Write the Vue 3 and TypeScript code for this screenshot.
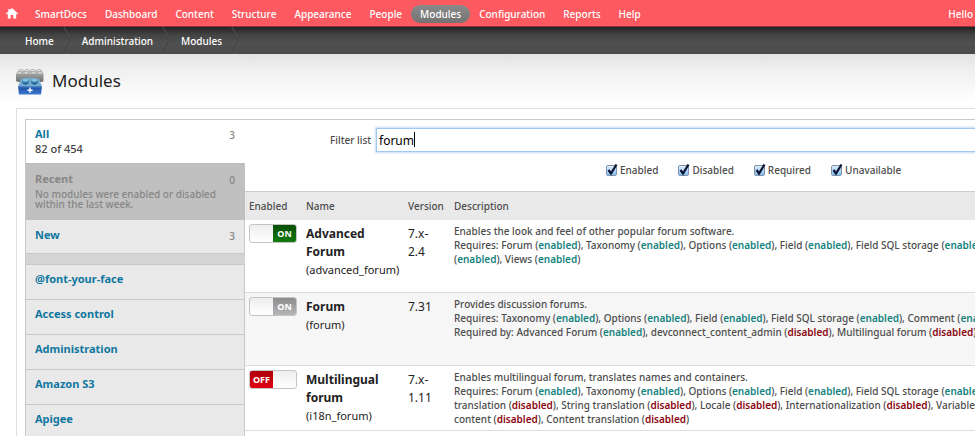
<script setup lang="ts">
import { ref, computed } from 'vue'

type Status = 'enabled' | 'disabled'
type State = 'on' | 'locked' | 'off'
interface Part { text: string; status?: Status }
interface ModuleRow { name: string[]; machine: string; version: string[]; state: State; lines: Part[][]; short?: boolean }

// Splits "Forum (enabled), Views (disabled)" into plain and status parts.
function parse(line: string): Part[] {
  return line.split(/(?<=\()(enabled|disabled)(?=\))/).map((text) =>
    text === 'enabled' || text === 'disabled' ? { text, status: text } : { text })
}

const menu = ['SmartDocs', 'Dashboard', 'Content', 'Structure', 'Appearance', 'People', 'Modules', 'Configuration', 'Reports', 'Help']
const crumbs = ['Home', 'Administration', 'Modules']
const categories = ['@font-your-face', 'Access control', 'Administration', 'Amazon S3', 'Apigee']

const query = ref('forum')
const filters = ref([
  { label: 'Enabled', on: true },
  { label: 'Disabled', on: true },
  { label: 'Required', on: true },
  { label: 'Unavailable', on: true },
])

const modules = ref<ModuleRow[]>([
  {
    name: ['Advanced', 'Forum'], machine: 'advanced_forum', version: ['7.x-', '2.4'], state: 'on',
    lines: [
      'Enables the look and feel of other popular forum software.',
      'Requires: Forum (enabled), Taxonomy (enabled), Options (enabled), Field (enabled), Field SQL storage (enabled),',
      '(enabled), Views (enabled)',
    ].map(parse),
  },
  {
    name: ['Forum'], machine: 'forum', version: ['7.31'], state: 'locked',
    lines: [
      'Provides discussion forums.',
      'Requires: Taxonomy (enabled), Options (enabled), Field (enabled), Field SQL storage (enabled), Comment (enabled)',
      'Required by: Advanced Forum (enabled), devconnect_content_admin (disabled), Multilingual forum (disabled)',
    ].map(parse),
  },
  {
    name: ['Multilingual', 'forum'], machine: 'i18n_forum', version: ['7.x-', '1.11'], state: 'off', short: true,
    lines: [
      'Enables multilingual forum, translates names and containers.',
      'Requires: Forum (enabled), Taxonomy (enabled), Options (enabled), Field (enabled), Field SQL storage (enabled),',
      'translation (disabled), String translation (disabled), Locale (disabled), Internationalization (disabled), Variable',
      'content (disabled), Content translation (disabled)',
    ].map(parse),
  },
])

const shown = computed(() => modules.value.filter((m) => m.machine.includes(query.value.trim().toLowerCase())))

function toggle(m: ModuleRow) {
  m.state = m.state === 'on' ? 'off' : 'on'
}
</script>

<template>
  <div class="page">
    <nav class="toolbar" aria-label="Toolbar">
      <a href="#" class="home" aria-label="Home">
        <svg width="12" height="11" viewBox="0 0 12 11"><path fill="#fff" d="M6 0 12 5.6 11.2 6.4 10.2 5.6V10.6H7.3V7H4.7V10.6H1.8V5.6L.8 6.4 0 5.6 2.3 3.4V1H3.8V2Z" /></svg>
      </a>
      <a v-for="m in menu" :key="m" href="#" class="item" :class="{ active: m === 'Modules' }">{{ m }}</a>
      <span class="hello">Hello</span>
    </nav>

    <nav class="crumbs" aria-label="Breadcrumb">
      <template v-for="c in crumbs" :key="c">
        <a href="#">{{ c }}</a>
        <svg class="sep" width="8" height="27" viewBox="0 0 8 27"><path d="M.5 0 7 13.5.5 27" fill="none" stroke="#3e3e3e" /><path d="M1.5 0 8 13.5 1.5 27" fill="none" stroke="#5a5a5a" stroke-width=".6" /></svg>
      </template>
    </nav>

    <header class="heading">
      <svg width="28" height="26" viewBox="0 0 28 26">
        <defs>
          <linearGradient id="brickTop" x1="0" y1="0" x2="0" y2="1"><stop offset="0" stop-color="#a0a1a2" /><stop offset="1" stop-color="#6c7071" /></linearGradient>
          <linearGradient id="brickFront" x1="0" y1="0" x2="0" y2="1"><stop offset="0" stop-color="#5a8fd0" /><stop offset=".25" stop-color="#2357ad" /><stop offset="1" stop-color="#3b78cf" /></linearGradient>
        </defs>
        <path d="M2 1.500H26L27.500 5H.5Z" fill="#bdbebd" />
        <path d="M0 4.800H27.500V12L26 13H2L0 12Z" fill="url(#brickTop)" />
        <g fill="#e2e2e1" stroke="#989999" stroke-width=".6">
          <ellipse cx="5" cy="1.600" rx="2.200" ry="1.200" /><ellipse cx="11" cy="1.600" rx="2.200" ry="1.200" /><ellipse cx="17" cy="1.600" rx="2.200" ry="1.200" /><ellipse cx="23" cy="1.600" rx="2.200" ry="1.200" />
          <ellipse cx="3.500" cy="3.900" rx="2.300" ry="1.200" /><ellipse cx="10" cy="3.900" rx="2.300" ry="1.200" /><ellipse cx="17.500" cy="3.900" rx="2.300" ry="1.200" /><ellipse cx="24" cy="3.900" rx="2.300" ry="1.200" />
        </g>
        <path d="M5 10Q14 7 23 10L26 17.500H2Z" fill="#76abd0" />
        <path d="M2 17H26L25 25.500H3Z" fill="url(#brickFront)" />
        <g fill="#468dbb"><ellipse cx="9.500" cy="13" rx="3.600" ry="2.800" /><ellipse cx="18.500" cy="13" rx="3.600" ry="2.800" /></g>
        <g fill="#1b5a88"><path d="M5.800 12.500Q9.500 18.500 13.200 12.500 9.500 15.500 5.800 12.500ZM14.800 12.500Q18.500 18.500 22.200 12.500 18.500 15.500 14.800 12.500Z" /></g>
        <g fill="#8cc4e2"><ellipse cx="9.500" cy="11.300" rx="2.600" ry="1.200" /><ellipse cx="18.500" cy="11.300" rx="2.600" ry="1.200" /></g>
        <path d="M13.300 18.600H14.700V20.500H16.600V21.900H14.700V23.800H13.300V21.900H11.400V20.500H13.300Z" fill="#fff" />
      </svg>
      <h1>Modules</h1>
    </header>

    <main class="panel">
      <div class="inner">
        <aside class="tabs">
          <a href="#" class="tab current">
            <span class="line"><b>All</b><span class="count">3</span></span>
            <span class="total">82 of 454</span>
          </a>
          <a href="#" class="tab recent">
            <span class="line"><b>Recent</b><span class="count">0</span></span>
            <span class="note">No modules were enabled or disabled within the last week.</span>
          </a>
          <a href="#" class="tab new"><span class="line"><b>New</b><span class="count">3</span></span></a>
          <div class="gap"></div>
          <a v-for="c in categories" :key="c" href="#" class="tab category"><b>{{ c }}</b></a>
        </aside>

        <section class="content">
          <form class="filter" @submit.prevent>
            <div class="search">
              <label for="filter-list">Filter list</label>
              <div class="field">
                <input id="filter-list" v-model="query" type="text" autocomplete="off" />
                <span class="caret"></span>
              </div>
            </div>
            <div class="checks">
              <label v-for="f in filters" :key="f.label">
                <span class="box">
                  <input v-model="f.on" type="checkbox" />
                  <svg v-if="f.on" width="12" height="13" viewBox="0 0 12 13"><path d="M2.500 7 5 10.500 10.500 1.500" fill="none" stroke="#0a1430" stroke-width="2.200" /></svg>
                </span>{{ f.label }}
              </label>
            </div>
          </form>

          <table>
            <colgroup><col class="c-enabled" /><col class="c-name" /><col class="c-version" /><col /></colgroup>
            <thead>
              <tr><th>Enabled</th><th>Name</th><th>Version</th><th>Description</th></tr>
            </thead>
            <tbody>
              <tr v-for="m in shown" :key="m.machine" :class="{ short: m.short }">
                <td>
                  <button type="button" role="switch" class="switch" :class="m.state" :aria-checked="m.state !== 'off'" :aria-label="m.name.join(' ')" :disabled="m.state === 'locked'" @click="toggle(m)">
                    <span>{{ m.state === 'off' ? 'OFF' : 'ON' }}</span>
                  </button>
                </td>
                <td class="name">
                  <b v-for="n in m.name" :key="n">{{ n }}</b>
                  <span>({{ m.machine }})</span>
                </td>
                <td class="version"><span v-for="v in m.version" :key="v">{{ v }}</span></td>
                <td class="description">
                  <p v-for="(line, i) in m.lines" :key="i"><span v-for="(p, j) in line" :key="j" :class="p.status">{{ p.text }}</span></p>
                </td>
              </tr>
            </tbody>
          </table>
        </section>
      </div>
    </main>
  </div>
</template>

<style>
body { background: #fff; }
</style>

<style scoped>
.page { font-family: "Noto Sans", "Open Sans", sans-serif; font-size: 10px; font-weight: 500; line-height: 14px; color: #4c4c4c; overflow: hidden; height: 100vh; }
a { text-decoration: none; color: inherit; }
.toolbar { display: flex; align-items: center; height: 27px; box-sizing: border-box; padding: 1px 2px 0 6px; background: #fc5a60; border-bottom: 1px solid #8f3438; color: #fff; white-space: nowrap; }
.home { display: flex; width: 12px; margin-right: 8px; }
.item { padding: 2px 9px; border-radius: 9px; }
.active { background: linear-gradient(#8a8a8a, #737373); }
.hello { margin-left: auto; }
.crumbs { display: flex; align-items: center; height: 27px; padding-left: 25px; background: linear-gradient(#222, #444 30%, #505050 60%, #4a4a4a); color: #fff; }
.sep { margin: 0 11px 0 9px; }
.heading { display: flex; align-items: center; gap: 8px; height: 54px; padding: 0 16px; background: linear-gradient(#e2e2e2, #f0f0f0 30%, #fff 90%); }
.heading svg { margin-top: 2px; }
h1 { margin: 0; font-size: 17px; line-height: 24px; font-weight: 400; color: #222; }
.panel { margin-left: 16px; padding: 10px 0 0 8px; border: solid #dedede; border-width: 1px 0 0 1px; }
.inner { display: flex; border: solid #c9c9c9; border-width: 1px 0 0 1px; }
.tabs { flex: 0 0 219px; }
.tab { display: block; box-sizing: border-box; padding: 0 9px; background: #e9e9e9; border-bottom: 1px solid #c8c8c8; border-right: 1px solid #c8c8c8; color: #1077a0; }
.tab b { font-size: 11px; line-height: 16px; }
.line { display: flex; justify-content: space-between; }
.count { color: #858585; line-height: 18px; }
.line { height: 16px; }
.total { display: block; color: #444; font-size: 11px; line-height: 14px; }
.note { display: block; line-height: 10px; }
.current { height: 44px; padding-top: 6px; background: #fff; border-color: #bbb; border-right-color: #fff; }
.recent { height: 56px; padding-top: 7px; background: #c0c0c0; color: #868686; border-color: #c0c0c0; }
.recent .note { margin-top: 2px; }
.new { height: 34px; padding-top: 7px; }
.gap { height: 10px; background: #d4d4d4; border-bottom: 1px solid #c8c8c8; }
.category { height: 35px; padding-top: 6px; }
.content { flex: 1; min-width: 0; }
.filter { padding-top: 8px; height: 71px; box-sizing: border-box; }
.search { display: flex; align-items: center; padding-left: 85px; }
.search > label { width: 46px; }
.field { position: relative; flex: 1; }
.field input { display: block; width: 100%; height: 24px; box-sizing: border-box; padding: 0 2px; border: 1px solid #a3c8f0; border-right: 0; box-shadow: 0 0 2px 1px #c5dcf6; outline: 0; font: 12px/20px "Noto Sans", "Open Sans", sans-serif; color: #000; }
.caret { position: absolute; left: 38px; top: 4px; width: 1px; height: 15px; background: #000; }
.checks { display: flex; gap: 20px; padding: 11px 0 0 361px; }
.checks label { display: flex; align-items: center; gap: 3px; }
.box { position: relative; display: flex; width: 11px; height: 11px; }
.box input { appearance: none; width: 11px; height: 11px; margin: 0; border: 1px solid #7f93ad; border-radius: 2px; background: linear-gradient(#dcebfa, #86bdf2); }
.box svg { position: absolute; left: 0; top: -2px; }
table { width: 100%; table-layout: fixed; border-collapse: collapse; border-spacing: 0; }
.c-enabled { width: 57px; }
.c-name { width: 102px; }
.c-version { width: 46px; }
th { height: 28px; box-sizing: border-box; padding: 0 4px; text-align: left; font-weight: 500; background: #e9e9e9; border-top: 1px solid #ccc; }
td { height: 73px; box-sizing: border-box; padding: 4px 0 0 4px; vertical-align: top; border-bottom: 1px solid #ddd; white-space: nowrap; }
.short td { height: 65px; }
tbody tr:nth-child(even) { background: #f6f6f6; }
td.name, td.version { padding-top: 5px; color: #222; line-height: 18px; font-size: 12px; font-weight: 400; }
.name b, .name span, .version span { display: block; }
.name span { font-size: 11px; }
.description p { margin: 0; }
.enabled { color: #15837f; font-weight: 600; }
.disabled { color: #8b0610; font-weight: 600; }
.switch { display: flex; width: 48px; height: 19px; padding: 0; border: 1px solid #c4c4c4; border-radius: 3px; overflow: hidden; background: linear-gradient(#eee, #fff); font: 700 9px/17px "Noto Sans", "Open Sans", sans-serif; color: #fff; }
.switch span { flex: 0 0 23px; text-align: center; }
.on, .locked { justify-content: flex-end; }
.on span { background: linear-gradient(#0a4f08, #117a0c); }
.locked span { background: linear-gradient(#8c8c8c, #b5b5b5); }
.off span { background: linear-gradient(#b0000c, #e00010); }
</style>
